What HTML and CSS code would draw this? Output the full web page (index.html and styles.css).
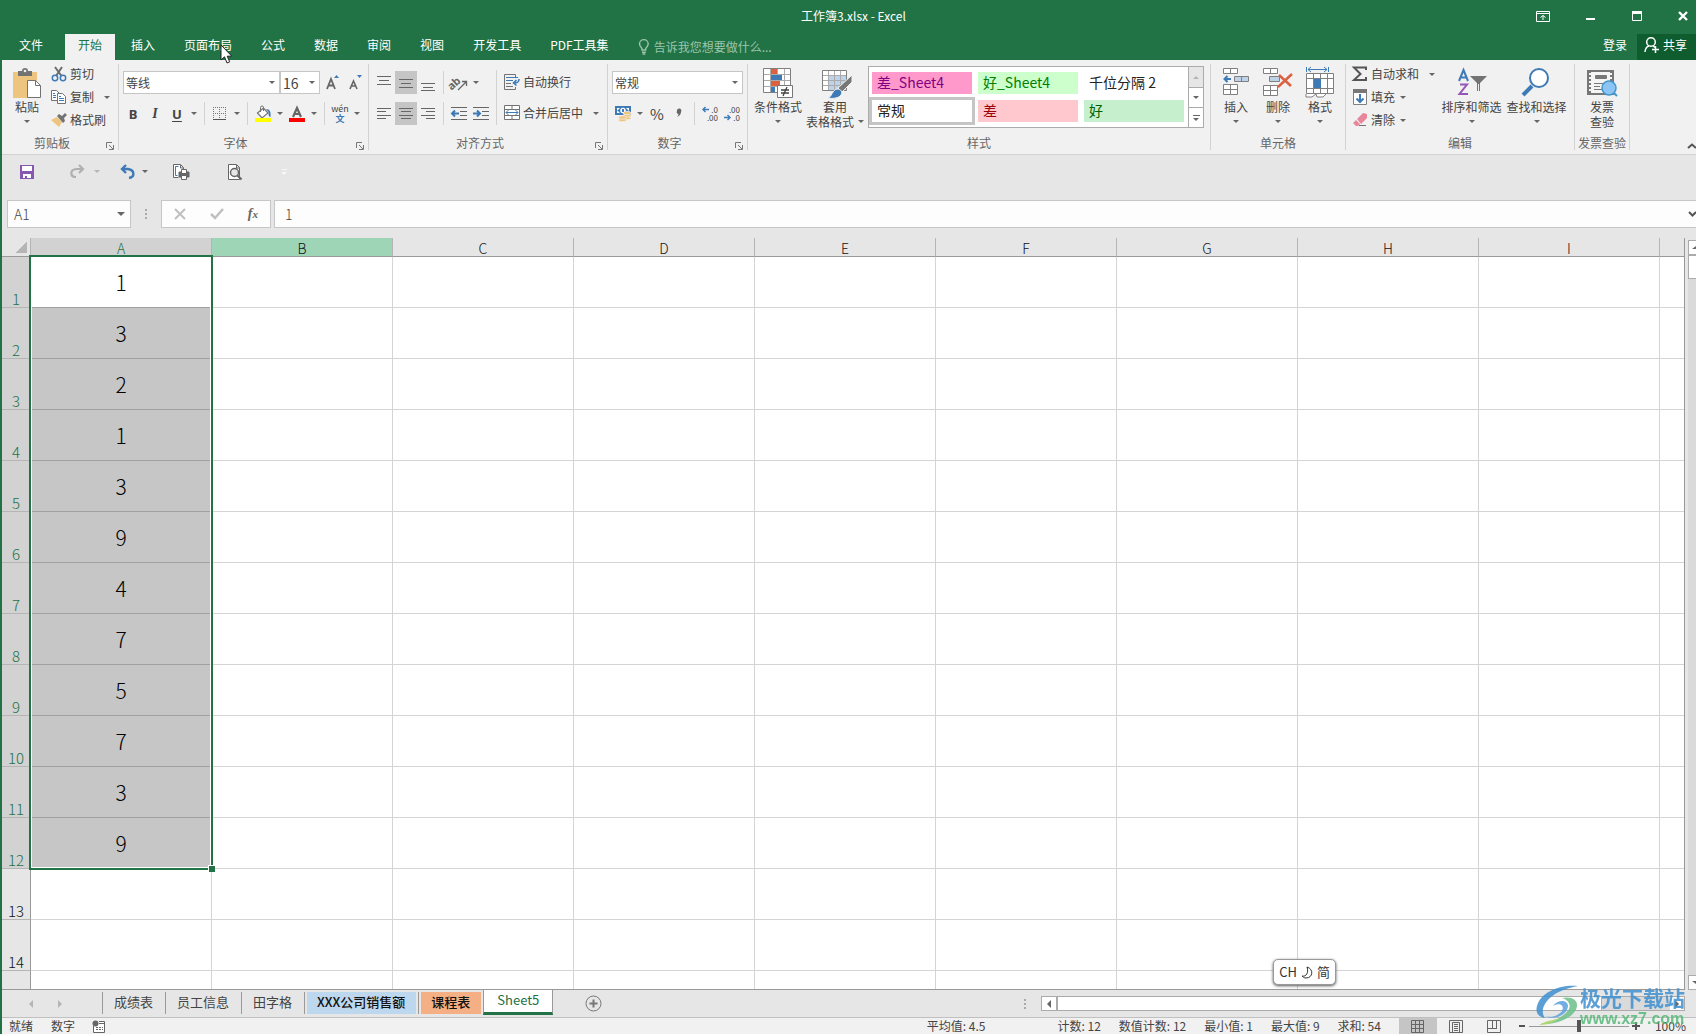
FILE: index.html
```html
<!DOCTYPE html>
<html lang="zh-CN">
<head>
<meta charset="utf-8">
<title>工作簿3.xlsx - Excel</title>
<link rel="stylesheet" href="styles.css">
</head>
<body>
<header class="titlebar">
  <h1 class="title">工作簿3.xlsx - Excel</h1>
  <div class="window-buttons">
    <button aria-label="功能区显示选项"><svg width="14" height="11" fill="none" stroke="#fff"><path d="M.5.5h13v10H.5zM1 2.500h12M7 9V4.500M4.500 6.500 7 4.500l2.500 2"/></svg></button>
    <button aria-label="最小化"><svg width="10" height="11"><path fill="#fff" d="M0 7h9v2H0z"/></svg></button>
    <button aria-label="最大化"><svg width="10" height="11" fill="none" stroke="#fff"><path d="M.5.5h9v9h-9z"/><path fill="#fff" stroke="none" d="M0 0h10v3H0z"/></svg></button>
    <button aria-label="关闭"><svg width="10" height="11" stroke="#fff" stroke-width="2.400"><path d="m1 1 8 8M9 1 1 9"/></svg></button>
  </div>
</header>

<nav class="tabs">
  <button class="tab tab-file">文件</button>
  <button class="tab tab-active">开始</button>
  <button class="tab">插入</button>
  <button class="tab">页面布局</button>
  <button class="tab">公式</button>
  <button class="tab">数据</button>
  <button class="tab">审阅</button>
  <button class="tab">视图</button>
  <button class="tab">开发工具</button>
  <button class="tab">PDF工具集</button>
  <label class="tellme">
    <svg width="12" height="16" fill="none" stroke="#9cc5ab" stroke-width="1.400"><path d="M4 11V9.500C2.500 8 1.500 7 1.500 5a4.300 4.300 0 0 1 8.700 0c0 2-1 3-2.500 4.500V11zM4 13.300h3.800M4.500 15h2.800"/></svg>
    <input type="text" placeholder="告诉我您想要做什么..." aria-label="告诉我您想要做什么">
  </label>
  <button class="login">登录</button>
  <button class="share"><svg width="16" height="18" fill="none" stroke="#fff" stroke-width="1.500"><circle cx="7" cy="6" r="4.300"/><path d="M1 16c.3-3.500 2-5.500 4-6M9 10l2 1.500M8 13.500h7M11.500 10v7"/></svg>共享</button>
</nav>

<section class="ribbon">
  <div class="group g-clip">
    <div class="group-body">
      <button class="big paste"><svg width="30" height="32"><path fill="#eec57e" d="M1 5h24v26H1z"/><path fill="#737373" d="M6 4h4a3 3 0 0 1 6 0h4v5H6z"/><circle cx="13" cy="4" r="1.300" fill="#f1f1f1"/><path fill="#fff" stroke="#737373" d="M15.500 13.500h8l5 5v12h-13z"/><path fill="none" stroke="#737373" d="M23.500 13.500v5h5"/></svg><span>粘贴</span><i class="caret"></i></button>
      <div class="stack">
        <button class="small"><svg width="16" height="16" fill="none"><path stroke="#6b6b6b" stroke-width="2" d="M4 1l6.500 9M11 1 5 10"/><circle cx="4" cy="12" r="2.700" stroke="#3e7ab5" stroke-width="1.500"/><circle cx="12" cy="12" r="2.700" stroke="#3e7ab5" stroke-width="1.500"/></svg>剪切</button>
        <button class="small"><svg width="16" height="16" fill="#fff" stroke="#737373"><path d="M.5 1.500h5l3 3v7h-8z"/><path d="M6.500 4.500h5l3 3v7h-8z"/><path stroke="#3e7ab5" d="M2 4.500h2M2 6.500h3M2 8.500h3M8 7.500h2M8 9.500h5M8 11.500h5"/></svg>复制<i class="caret far"></i></button>
        <button class="small"><svg width="16" height="16"><path fill="#eec57e" d="m0 8 6-3 5 5-3 5z"/><path fill="#737373" d="m6 4 2-2 3 2 3-3 2 2-3 3 1 3-2 2z"/></svg>格式刷</button>
      </div>
    </div>
    <div class="group-foot"><span>剪贴板</span><button class="launch" aria-label="剪贴板设置"><svg width="8" height="8" fill="none" stroke="#777"><path d="M.5 6V.5H6M3 3l4 4M7.500 3v4.500H3"/></svg></button></div>
  </div>

  <div class="group g-font">
    <div class="group-body rows">
      <div class="row">
        <span class="combo font-name"><select aria-label="字体"><option>等线</option></select></span>
        <span class="combo font-size"><select aria-label="字号"><option>16</option></select></span>
        <button class="ib grow" aria-label="增大字号"><svg width="14" height="16"><path fill="none" stroke="#666" stroke-width="1.800" d="m1 14 4-10 4 10M2.500 10.500h5"/><path fill="#3e7ab5" d="m8 3 2.500-3L13 3z"/></svg></button>
        <button class="ib" aria-label="减小字号"><svg width="14" height="16"><path fill="none" stroke="#666" stroke-width="1.600" d="m1 14 3.500-8L8 14M2 11h5"/><path fill="#3e7ab5" d="m8 0 2.500 3L13 0z"/></svg></button>
      </div>
      <div class="row">
        <button class="ib bold">B</button><button class="ib italic">I</button><button class="ib under">U</button><button class="cb" aria-label="下划线选项"><i class="caret"></i></button>
        <i class="vs"></i>
        <button class="ib" aria-label="边框"><svg width="14" height="14" fill="none" stroke="#777"><path stroke-dasharray="1 1" d="M0 .5h13M0 6.500h13M.5 0v12M6.500 0v12M12.500 0v12"/><path stroke="#555" d="M0 12.500h13"/></svg></button><button class="cb" aria-label="边框选项"><i class="caret"></i></button>
        <i class="vs"></i>
        <button class="ib" aria-label="填充颜色"><svg width="16" height="16"><path fill="#fff" stroke="#737373" stroke-width="1.200" d="m2.500 7 6-5L13 7l-6 5z"/><path fill="none" stroke="#737373" d="M5.500 6V1.500a1.500 1.500 0 0 1 3 0V5"/><path fill="#3e7ab5" d="M11 3c4 0 5 3 4.500 8-2 0-2-3-2-5z"/><path fill="#ff0" d="M0 12h16v4H0z"/></svg></button><button class="cb" aria-label="填充颜色选项"><i class="caret"></i></button>
        <button class="ib" aria-label="字体颜色"><svg width="16" height="16"><path fill="none" stroke="#666" stroke-width="2.200" d="m4 11 4-9 4 9M5.500 8h5"/><path fill="red" d="M0 12h16v4H0z"/></svg></button><button class="cb" aria-label="字体颜色选项"><i class="caret"></i></button>
        <i class="vs"></i>
        <button class="ib pinyin"><span>wén</span><b>文</b></button><button class="cb" aria-label="拼音选项"><i class="caret"></i></button>
      </div>
    </div>
    <div class="group-foot"><span>字体</span><button class="launch" aria-label="字体设置"><svg width="8" height="8" fill="none" stroke="#777"><path d="M.5 6V.5H6M3 3l4 4M7.500 3v4.500H3"/></svg></button></div>
  </div>

  <div class="group g-align">
    <div class="group-body">
      <div class="rows">
        <div class="row">
          <button class="ib" aria-label="顶端对齐"><svg width="14" height="16" stroke="#666"><path d="M0 1.500h14M2 5.500h10M0 9.500h14"/></svg></button>
          <button class="ib on" aria-label="垂直居中"><svg width="14" height="16" stroke="#666"><path d="M0 4.500h14M2 8.500h10M0 12.500h14"/></svg></button>
          <button class="ib" aria-label="底端对齐"><svg width="14" height="16" stroke="#666"><path d="M0 8.500h14M2 12.500h10M0 15.500h14"/></svg></button>
          <i class="vs"></i>
          <button class="ib" aria-label="方向"><svg width="17" height="16"><text x="-3" y="11" font-size="11" font-weight="700" fill="#666" font-family="Noto Sans" transform="rotate(-42 5 9)">ab</text><path fill="none" stroke="#666" stroke-width="1.300" d="m7 15 8-8M11 6.500h4.500V11"/></svg></button><button class="cb" aria-label="方向选项"><i class="caret"></i></button>
        </div>
        <div class="row">
          <button class="ib" aria-label="左对齐"><svg width="14" height="12" stroke="#666"><path d="M0 .5h14M0 3.500h9M0 7.500h14M0 10.500h9"/></svg></button>
          <button class="ib on" aria-label="居中"><svg width="14" height="12" stroke="#666"><path d="M0 .5h14M2 3.500h10M0 7.500h14M2 10.500h10"/></svg></button>
          <button class="ib" aria-label="右对齐"><svg width="14" height="12" stroke="#666"><path d="M0 .5h14M5 3.500h9M0 7.500h14M5 10.500h9"/></svg></button>
          <i class="vs"></i>
          <button class="ib" aria-label="减少缩进"><svg width="16" height="13" fill="none" stroke="#666"><path d="M0 .5h16M9 4.500h7M9 8.500h7M0 12.500h16"/><path stroke="#3e7ab5" stroke-width="2" d="M1 6.500h7M4 3.500l-3 3 3 3"/></svg></button>
          <button class="ib" aria-label="增加缩进"><svg width="16" height="13" fill="none" stroke="#666"><path d="M0 .5h16M9 4.500h7M9 8.500h7M0 12.500h16"/><path stroke="#3e7ab5" stroke-width="2" d="M0 6.500h7M4 3.500l3 3-3 3"/></svg></button>
        </div>
      </div>
      <i class="vs tall"></i>
      <div class="rows">
        <div class="row"><button class="small"><svg width="16" height="16" fill="none" stroke="#737373"><path d="M11.500 3V.5H.5v15h11V13"/><path d="M2 9.500h5M2 12.500h7" /><path stroke="#3e7ab5" d="M2 3.500h12M2 6.500h7"/><path stroke="#3e7ab5" stroke-width="1.600" d="M15 5c0 3-1 4-5 4M12.500 6 9.500 9l3 2.500"/></svg>自动换行</button></div>
        <div class="row"><button class="small"><svg width="16" height="16" fill="none" stroke="#737373"><path fill="#fff" d="M.5.5h15v14H.5z"/><path d="M0 4.500h16M0 10.500h16M8 0v4M8 11v4"/><path stroke="#3e7ab5" d="M2 7.500h12M4.500 5 2 7.500 4.500 10M11.500 5 14 7.500 11.500 10"/></svg>合并后居中<i class="caret far"></i></button></div>
      </div>
    </div>
    <div class="group-foot"><span>对齐方式</span><button class="launch" aria-label="对齐设置"><svg width="8" height="8" fill="none" stroke="#777"><path d="M.5 6V.5H6M3 3l4 4M7.500 3v4.500H3"/></svg></button></div>
  </div>

  <div class="group g-num">
    <div class="group-body rows">
      <div class="row"><span class="combo num-format"><select aria-label="数字格式"><option>常规</option></select></span></div>
      <div class="row">
        <button class="ib" aria-label="会计数字格式"><svg width="16" height="16"><path fill="#3e7ab5" d="M0 0h16v9H0z"/><path fill="#fff" d="M2 2h3L2 5zM14 2h-3l3 3zM2 7h3L2 4z"/><circle cx="8" cy="4.500" r="2.700" fill="#fff"/><path fill="#3e7ab5" d="M7 3h2v3H7z"/><g fill="#eec57e" stroke="#f1f1f1" stroke-width=".7"><ellipse cx="12" cy="12" rx="4" ry="1.700"/><ellipse cx="12" cy="9.500" rx="4" ry="1.700"/><ellipse cx="12" cy="7" rx="4" ry="1.700"/><ellipse cx="7.500" cy="14" rx="4" ry="1.700"/><ellipse cx="7.500" cy="11.500" rx="4" ry="1.700"/></g></svg></button><button class="cb" aria-label="货币选项"><i class="caret"></i></button>
        <button class="ib percent">%</button>
        <button class="ib" aria-label="千位分隔样式"><svg width="6" height="10"><path fill="#666" d="M1 2a2.200 2.200 0 1 1 4 1c0 2-1.500 4-4 5 1-1 1.500-2 1.500-3A2 2 0 0 1 1 2z"/></svg></button>
        <i class="vs"></i>
        <button class="ib dec" aria-label="增加小数位数"><span>.0</span><span>.00</span><svg width="7" height="7" fill="none" stroke="#3e7ab5" stroke-width="1.400"><path d="M1 3.500h6M3.500 1 1 3.500 3.500 6"/></svg></button>
        <button class="ib dec dec-less" aria-label="减少小数位数"><span>.00</span><span>.0</span><svg width="7" height="7" fill="none" stroke="#3e7ab5" stroke-width="1.400"><path d="M0 3.500h6M3.500 1 6 3.500 3.500 6"/></svg></button>
      </div>
    </div>
    <div class="group-foot"><span>数字</span><button class="launch" aria-label="数字设置"><svg width="8" height="8" fill="none" stroke="#777"><path d="M.5 6V.5H6M3 3l4 4M7.500 3v4.500H3"/></svg></button></div>
  </div>

  <div class="group g-style">
    <div class="group-body">
      <button class="big cond"><svg width="30" height="32"><path fill="#fff" stroke="#808080" d="M.5 1.500h27v24H.5z"/><path fill="none" stroke="#aaa" d="M7.500 2v23M14.500 2v23M21.500 2v23M1 7.500h26M1 13.500h26M1 19.500h26"/><path fill="#dc6141" d="M8 2h6v5H8zM8 14h9v5H8z"/><path fill="#3e7ab5" d="M8 8h11v5H8zM8 20h4v5H8z"/><path fill="#fff" stroke="#777" d="M14.500 18.500h15v12h-15z"/><path fill="none" stroke="#444" stroke-width="1.300" d="M18 23h8M18 26h8M24 20l-4 9"/></svg><span>条件格式</span><i class="caret"></i></button>
      <button class="big tablefmt"><svg width="26" height="32"><path fill="#fff" stroke="#808080" d="M.5 3.500h24v20H.5z"/><path fill="#bed3ea" d="M7 9h17v14H7z"/><path fill="none" stroke="#aaa" d="M6.500 4v19M12.500 4v19M18.500 4v19M1 8.500h23M1 13.500h23M1 18.500h23"/><path fill="#777" stroke="#f1f1f1" d="M30 8v7L20 25l-4-4z"/><path fill="#3e7ab5" stroke="#f1f1f1" d="M6 31c4-1 4-8 9-9 4 0 6 3 4 6s-8 4-13 3z"/></svg><span>套用</span><span class="withcaret">表格格式<i class="caret"></i></span></button>
      <div class="gallery">
        <div class="swatches">
          <button class="sw bad4">差_Sheet4</button><button class="sw good4">好_Sheet4</button><button class="sw">千位分隔 2</button>
          <button class="sw chosen">常规</button><button class="sw bad">差</button><button class="sw good">好</button>
        </div>
        <div class="gallery-nav">
          <button class="off" aria-label="上一行"><i class="caret up"></i></button>
          <button aria-label="下一行"><i class="caret"></i></button>
          <button class="more" aria-label="其他样式"><i class="caret"></i></button>
        </div>
      </div>
    </div>
    <div class="group-foot"><span>样式</span></div>
  </div>

  <div class="group g-cells">
    <div class="group-body">
      <button class="big"><svg width="28" height="32" fill="#fff" stroke="#808080"><path d="M1.500 1.500h14v5h-14zM8.500 1.500v5M1.500 17.500h14v10h-14zM8.500 17.500v10M1.500 22.500h14"/><path fill="#bed3ea" d="M12.500 9.500h14v5h-14zM19.500 9.500v5"/><path fill="none" stroke="#3e7ab5" stroke-width="2" d="M3 12h6M5.500 9 2.500 12l3 3"/></svg><span>插入</span><i class="caret"></i></button>
      <button class="big"><svg width="30" height="32" fill="#fff" stroke="#808080"><path d="M.5 1.500h14v5H.5zM7.500 1.500v5M.5 18.500h14v10H.5zM7.500 18.500v10M.5 23.500h14"/><path fill="#bed3ea" d="M6.500 9.500h10v5h-10z"/><path fill="none" stroke="#dc6141" stroke-width="2.500" d="m16 8 12 11M29 7 15 20"/></svg><span>删除</span><i class="caret"></i></button>
      <button class="big"><svg width="30" height="32" fill="none" stroke="#3e7ab5"><path d="M1.500 0v5M23.500 0v5M3 2.500h19M6 0 3 2.500 6 5M19 0l3 2.500L19 5"/><path fill="#fff" stroke="#808080" d="M1.500 6.500h27v20h-27zM8.500 6.500v20M15.500 6.500v20M22.500 6.500v20M1.500 11.500h27M1.500 21.500h27M1 27v3h6l4-3 1 3h6l3-3"/><path fill="#3e7ab5" stroke="none" d="M9 12h7v9H9z"/></svg><span>格式</span><i class="caret"></i></button>
    </div>
    <div class="group-foot"><span>单元格</span></div>
  </div>

  <div class="group g-edit">
    <div class="group-body">
      <div class="stack">
        <button class="small"><svg width="16" height="16" fill="none" stroke="#555" stroke-width="2"><path d="M14 4V1.500H2L8.500 8 2 14h12v-3"/></svg>自动求和<i class="caret far"></i></button>
        <button class="small"><svg width="16" height="16" fill="none"><path fill="#fff" stroke="#808080" d="M1.500.5h13v15h-13z"/><path fill="#777" d="M1 0h14v4H1z"/><path stroke="#3e7ab5" stroke-width="2" d="M8 5v8M4.500 9.500 8 13l3.500-3.500"/></svg>填充<i class="caret"></i></button>
        <button class="small"><svg width="16" height="16"><path fill="#e8879b" d="m5 7 6-6 4 1v4l-6 6zM1 11l3-3 4 4-2 2H4z"/><path stroke="#737373" d="M7 13.500h7"/></svg>清除<i class="caret"></i></button>
      </div>
      <button class="big wide"><svg width="32" height="32" fill="none" stroke-width="2"><path stroke="#3e7ab5" d="m3 14 4.500-11L12 14M4.500 10.500h6"/><path stroke="#9557b5" d="M4 17.500h7L3.500 27H12"/><path fill="#737373" d="M14 9h17l-7 7v8h-3v-8z"/><path stroke="#f1f1f1" stroke-width="1" d="M22.500 17v7"/></svg><span>排序和筛选</span><i class="caret"></i></button>
      <button class="big wide"><svg width="32" height="32"><path stroke="#3e7ab5" stroke-width="4" d="m2 28 9-9"/><circle cx="18" cy="11" r="9" fill="#fff" stroke="#3e7ab5" stroke-width="2"/></svg><span>查找和选择</span><i class="caret"></i></button>
    </div>
    <div class="group-foot"><span>编辑</span></div>
  </div>

  <div class="group g-inv">
    <div class="group-body">
      <button class="big"><svg width="32" height="32"><path fill="#f5f5f5" stroke="#777" stroke-width="2" d="M2 4h25v23H2z"/><path stroke="#777" stroke-width="2" stroke-dasharray="2 2" d="M4 4v23M25 4v12"/><rect x="9" y="8" width="12" height="4" rx="1" fill="#777"/><path stroke="#777" d="M8 16.500h9M8 19.500h6M8 22.500h8"/><circle cx="23" cy="21" r="7" fill="#8cc4f5" stroke="#4596c8" stroke-width="1.500"/><path stroke="#4596c8" stroke-width="2" d="m28 26 3 3"/></svg><span>发票</span><span>查验</span></button>
    </div>
    <div class="group-foot"><span>发票查验</span></div>
  </div>
  <button class="collapse" aria-label="折叠功能区"><svg width="9" height="6" fill="none" stroke="#555" stroke-width="2"><path d="m1 5 4-3.500L9 5"/></svg></button>
</section>

<div class="quick">
  <button class="q" aria-label="保存"><svg width="16" height="16"><path fill="#8858b0" d="M1 1h14v14H1z"/><path fill="#fff" d="M3 2h10v5H3zM4 10h8v4H8v-2H6v2H4z"/></svg></button>
  <button class="q q-redo" aria-label="恢复"><svg width="16" height="16" fill="none" stroke="#b0b0b0" stroke-width="2.200"><path d="M14 5H7C.500 6 1 13 7 13M10 1l4 4-4 4"/></svg></button><i class="caret pale"></i>
  <button class="q q-undo" aria-label="撤消"><svg width="16" height="16" fill="none" stroke="#3e7ab5" stroke-width="2.400"><path d="M2 5h6c7 1 7 8 1 9M6 1 2 5l4 4"/></svg></button><i class="caret"></i>
  <button class="q q-print" aria-label="快速打印"><svg width="17" height="16" fill="none" stroke="#666"><path fill="#fff" d="M5.500 13.500h-5V.5h7l3 3V6M7.500 1v3h3"/><path stroke="#3e7ab5" d="M5.500 2.500h-3v9h2"/><path fill="#666" d="M6 8h10v5H6z"/><path fill="#fff" d="M8.500 5.500h5v4h-5zM8.500 11.500h5v4h-5z"/></svg></button>
  <button class="q q-preview" aria-label="打印预览"><svg width="16" height="16" fill="none" stroke="#666"><path fill="#fff" d="M1.500.5h8l3 3v12h-11zM9.500 1v3h3"/><circle cx="7.500" cy="8.500" r="4" fill="#e6e6e6" stroke-width="1.500"/><path stroke-width="2.200" d="m10.500 11.500 4 4"/></svg></button>
  <button class="q-more" aria-label="自定义快速访问工具栏"><i class="caret"></i></button>
</div>

<div class="formula">
  <span class="namebox"><input type="text" value="A1" aria-label="名称框"><i class="caret wide-caret"></i></span>
  <i class="dots"></i>
  <div class="fx">
    <button aria-label="取消"><svg width="12" height="12" stroke="#c0c0c0" stroke-width="2"><path d="m1 1 10 10M11 1 1 11"/></svg></button>
    <button aria-label="输入"><svg width="14" height="12" fill="none" stroke="#c0c0c0" stroke-width="2.500"><path d="m1 6 4 4 8-9"/></svg></button>
    <button class="fxbtn">f<sub>x</sub></button>
  </div>
  <div class="fbox"><input type="text" value="1" aria-label="编辑栏"><svg width="8" height="6" fill="none" stroke="#555" stroke-width="2"><path d="m1 1 3.500 3.500L8 1"/></svg></div>
</div>

<main class="work">
  <div class="sheet">
    <table>
      <colgroup><col class="c-row"><col class="c"><col class="c"><col class="c"><col class="c"><col class="c"><col class="c"><col class="c"><col class="c"><col class="c"><col></colgroup>
      <thead><tr><td class="corner"></td><th class="sel">A</th><th class="hover">B</th><th>C</th><th>D</th><th>E</th><th>F</th><th>G</th><th>H</th><th>I</th><th></th></tr></thead>
      <tbody>
        <tr class="s"><th>1</th><td class="active">1</td><td></td><td></td><td></td><td></td><td></td><td></td><td></td><td></td><td></td></tr>
        <tr class="s"><th>2</th><td>3</td><td></td><td></td><td></td><td></td><td></td><td></td><td></td><td></td><td></td></tr>
        <tr class="s"><th>3</th><td>2</td><td></td><td></td><td></td><td></td><td></td><td></td><td></td><td></td><td></td></tr>
        <tr class="s"><th>4</th><td>1</td><td></td><td></td><td></td><td></td><td></td><td></td><td></td><td></td><td></td></tr>
        <tr class="s"><th>5</th><td>3</td><td></td><td></td><td></td><td></td><td></td><td></td><td></td><td></td><td></td></tr>
        <tr class="s"><th>6</th><td>9</td><td></td><td></td><td></td><td></td><td></td><td></td><td></td><td></td><td></td></tr>
        <tr class="s"><th>7</th><td>4</td><td></td><td></td><td></td><td></td><td></td><td></td><td></td><td></td><td></td></tr>
        <tr class="s"><th>8</th><td>7</td><td></td><td></td><td></td><td></td><td></td><td></td><td></td><td></td><td></td></tr>
        <tr class="s"><th>9</th><td>5</td><td></td><td></td><td></td><td></td><td></td><td></td><td></td><td></td><td></td></tr>
        <tr class="s"><th>10</th><td>7</td><td></td><td></td><td></td><td></td><td></td><td></td><td></td><td></td><td></td></tr>
        <tr class="s"><th>11</th><td>3</td><td></td><td></td><td></td><td></td><td></td><td></td><td></td><td></td><td></td></tr>
        <tr class="s"><th>12</th><td>9</td><td></td><td></td><td></td><td></td><td></td><td></td><td></td><td></td><td></td></tr>
        <tr><th>13</th><td></td><td></td><td></td><td></td><td></td><td></td><td></td><td></td><td></td><td></td></tr>
        <tr><th>14</th><td></td><td></td><td></td><td></td><td></td><td></td><td></td><td></td><td></td><td></td></tr>
        <tr><th></th><td></td><td></td><td></td><td></td><td></td><td></td><td></td><td></td><td></td><td></td></tr>
      </tbody>
    </table>
    <div class="selection"></div>
    <div class="ime">CH <svg width="12" height="13" fill="none" stroke="#333"><path d="M6 1c7 2 6 11-1 11-2 0-3-1-4-2 4 1 7-3 5-9z"/></svg> 简</div>
  </div>
  <div class="vscroll">
    <div class="vs-btn"><i class="caret up"></i></div>
    <div class="vs-thumb"></div>
    <div class="vs-track"></div>
    <div class="vs-btn"><i class="caret"></i></div>
  </div>
</main>

<footer>
  <div class="sheetbar">
    <div class="sheetnav"><i class="tri-l"></i><i class="tri-r"></i></div>
    <button class="st">成绩表</button>
    <button class="st">员工信息</button>
    <button class="st">田字格</button>
    <button class="st tint blue"><span>XXX公司销售额</span></button>
    <button class="st tint orange"><span>课程表</span></button>
    <button class="st current">Sheet5</button>
    <button class="add" aria-label="新工作表"><svg width="17" height="17" fill="none" stroke="#777"><circle cx="8.500" cy="8.500" r="7.500"/><path stroke-width="2" d="M8.500 4.500v8M4.500 8.500h8"/></svg></button>
    <i class="dots"></i>
    <div class="hscroll"><span class="hs-btn"><i class="tri-l"></i></span><span class="hs-thumb"></span><span class="hs-track"></span><span class="hs-btn"><i class="tri-r"></i></span></div>
  </div>
  <div class="status">
    <span>就绪</span><span>数字</span>
    <svg class="macro" width="14" height="13" fill="none" stroke="#666"><path fill="#fff" d="M1.500 6v6.500h11v-11H7"/><path stroke-dasharray="2 1" d="M4 7.500h7M4 9.500h7"/><path d="M7 3.500h6"/><circle cx="3.500" cy="3.500" r="3" fill="#666" stroke="none"/></svg>
    <span class="avg">平均值: 4.5</span><span class="cnt">计数: 12</span><span>数值计数: 12</span><span>最小值: 1</span><span>最大值: 9</span><span>求和: 54</span>
    <div class="views">
      <button class="on" aria-label="普通"><svg width="14" height="13" fill="none" stroke="#666"><path d="M.5.5h12v12H.5zM4.500 0v13M8.500 0v13M0 4.500h13M0 8.500h13"/></svg></button>
      <button aria-label="页面布局"><svg width="14" height="13" fill="none" stroke="#666"><path d="M.5.5h13v12H.5zM3.500 2.500h7v10h-7zM5 4.500h4M5 6.500h4M5 8.500h4M5 10.500h4"/></svg></button>
      <button aria-label="分页预览"><svg width="14" height="13" fill="none" stroke="#666"><path d="M.5.5h13v12H.5zM5.500 0v8M9.500 0v8M1 8.500h9"/></svg></button>
    </div>
    <div class="zoombox">
      <button aria-label="缩小"><svg width="8" height="8"><path fill="#555" d="M1 3h6v2H1z"/></svg></button>
      <input class="zoom" type="range" min="10" max="190" value="100" aria-label="缩放">
      <button aria-label="放大"><svg width="8" height="8"><path fill="#555" d="M0 3h8v2H0zM3 0h2v8H3z"/></svg></button>
    </div>
    <span class="pct">100%</span>
  </div>
</footer>

<div class="watermark">
  <svg width="44" height="42" viewBox="0 0 44 42"><path fill="#3f8fd0" d="M42 1C26-1 5 6 1 21c-2 7 2 11 8 12C4 26 8 18 15 12 22 6 32 3 42 1z"/><path fill="#5aa0dc" d="M7 30c5 4 16 1 19-4 3-6-3-9-9-5 5-7 15-6 15 0 0 9-16 16-25 9z"/><path fill="#6cc08a" d="M26 13c8-2 16 1 15 8-1 10-18 19-36 18 14-2 25-9 28-15 2-5-1-9-7-11z"/><path fill="#a5d05d" d="M3 40c9-5 16-5 21-7-5 4-12 7-21 7z"/></svg>
  <div><strong>极光下载站</strong><em>www.xz7.com</em></div>
</div>
<svg class="pointer" width="14" height="21" viewBox="0 0 14 21"><path fill="#fff" stroke="#222" d="M1 1v15l3.500-3.200L7 19l2.700-1.200-2.500-5.600h4.600z"/></svg>
</body>
</html>
```

FILE: styles.css
```css
* { box-sizing: border-box; }

body {
  margin: 0;
  height: 100vh;
  display: flex;
  flex-direction: column;
  overflow: hidden;
  background: #e6e6e6;
  border-left: 2px solid #217346;
  color: #444;
  font: 12px/16px "Noto Sans CJK SC", sans-serif;
}

button, input, select { font: inherit; color: inherit; margin: 0; }
button { display: flex; align-items: center; justify-content: center; padding: 0; border: 0; background: none; white-space: nowrap; }
input { border: 0; background: none; padding: 0; min-width: 0; outline: 0; }
svg { display: block; flex: none; overflow: visible; }

.caret { flex: none; width: 0; height: 0; border: 3px solid transparent; border-top-color: #666; border-bottom: 0; }
.caret.up { border-top: 0; border-bottom: 3px solid #b5b5b5; }
.caret.pale { border-top-color: #b5b5b5; }
.wide-caret { border-width: 4px 4px 0; }

/* Title bar */
.titlebar { flex: none; height: 34px; display: grid; grid-template-columns: 1fr auto 1fr; align-items: center; padding-bottom: 2px; background: #217346; color: #fff; }
.title { grid-column: 2; margin: 0; padding-left: 9px; font-size: 12px; font-weight: 400; }
.window-buttons { display: flex; justify-content: flex-end; gap: 36px; padding-right: 8px; }

/* Ribbon tabs */
.tabs { flex: none; height: 26px; display: flex; gap: 3px; background: #217346; color: #fff; }
.tab { padding: 0 13px 5px; }
.tab-file { margin: 0 6px 0 4px; }
.tab-active { background: #f1f1f1; color: #217346; }
.tellme { flex: 1; display: flex; align-items: center; gap: 4px; margin-left: 13px; padding-bottom: 1px; }
.tellme input { flex: 1; }
.tellme input::placeholder { color: #9cc5ab; opacity: 1; }
.login { padding: 0 7px 4px; }
.share { gap: 3px; padding: 0 9px 4px 7px; background: #0f5c2e; }

/* Ribbon */
.ribbon { flex: none; height: 95px; display: flex; padding: 4px 0; background: #f1f1f1; border-bottom: 1px solid #d2d2d2; }
.group { flex: none; display: flex; flex-direction: column; border-right: 1px solid #d2d2d2; }
.group-body { flex: 1; display: flex; }
.group-foot { height: 16px; line-height: 18px; display: flex; color: #666; white-space: nowrap; }
.group-foot span { flex: 1; display: flex; justify-content: center; width: 0; }
.launch { flex: none; width: 16px; align-items: flex-end; }
.g-clip { width: 117px; }
.g-font { width: 250px; }
.g-align { width: 239px; }
.g-num { width: 140px; }
.g-style { width: 463px; }
.g-cells { width: 135px; }
.g-edit { width: 229px; }
.g-inv { width: 55px; }
.g-clip .group-body { padding-left: 4px; }
.g-font .group-body { padding-left: 3px; }
.g-align .group-body, .g-num .group-body, .g-cells .group-body { padding-left: 4px; }
.g-style .group-body, .g-edit .group-body { padding-left: 3px; }
.g-inv .group-body { justify-content: center; }

.rows { display: flex; flex-direction: column; gap: 8px; padding-top: 7px; }
.g-align .group-body > .rows { flex: none; }
.row { display: flex; height: 23px; }
.ib { width: 22px; height: 23px; flex: none; }
.ib.on { background: #c5c5c5; }
.cb { width: 12px; flex: none; }
.vs { flex: none; width: 1px; margin: 0 4px; background: #d2d2d2; }
.vs.tall { height: 55px; margin-top: 6px; }
.stack { display: flex; flex-direction: column; }
.small { height: 23px; gap: 3px; justify-content: flex-start; }
.stack .small { padding: 0 3px 3px; }
.g-align .small { padding: 0 3px 1px; }
.small .caret { margin-left: 2px; }
.small .caret.far { margin-left: 7px; }
.big { flex: none; width: 42px; height: 70px; flex-direction: column; justify-content: flex-start; padding-top: 3px; line-height: 15px; }
.big > .caret { margin-top: 6px; }
.big.cond { width: 54px; }
.big.tablefmt { width: 60px; }
.big.wide { width: 65px; }
.withcaret { display: flex; align-items: center; gap: 4px; }
.g-edit .stack { width: 90px; }

.combo { position: relative; display: flex; background: #fff; border: 1px solid #c6c6c6; }
.combo::after { content: ""; position: absolute; right: 4px; top: 9px; border: 3px solid transparent; border-top-color: #666; border-bottom: 0; }
.combo select { appearance: none; width: 100%; border: 0; padding: 0 2px; background: none; }
.font-name { width: 157px; margin-left: 1px; }
.font-size { width: 40px; }
.font-size select { font-size: 14px; }
.num-format { width: 131px; }
.grow { margin: 0 1px 0 2px; }
.bold { font: 700 13px "Noto Sans", sans-serif; }
.italic { font: italic 700 14px "Liberation Serif", serif; }
.under { font: 700 13px "Noto Sans", sans-serif; text-decoration: underline; text-underline-offset: 2px; }
.pinyin { flex-direction: column; line-height: 10px; font-size: 9px; }
.pinyin b { color: #3e7ab5; }
.percent { font-size: 15px; }
.dec { display: grid; grid-template-columns: 1fr auto; grid-template-rows: 8px 8px; align-content: center; padding: 0 3px; font-size: 8px; line-height: 8px; }
.dec span { grid-column: 1 / 3; justify-self: end; }
.dec span:first-child { grid-row: 1; }
.dec span:nth-child(2) { grid-row: 2; }
.dec svg { grid-area: 1 / 1; }
.dec-less svg { grid-area: 2 / 1; }

.gallery { display: flex; width: 336px; height: 62px; margin: 2px 0 0 3px; background: #fff; border: 1px solid #ababab; }
.swatches { flex: 1; display: grid; grid-template-columns: repeat(3, 100px); grid-auto-rows: 22px; gap: 6px; padding: 5px 3px; }
.sw { justify-content: flex-start; padding: 0 0 2px 5px; font-size: 14px; line-height: 20px; color: #222; }
.bad4 { background: #ff99cc; color: #800080; }
.good4 { background: #ccffcc; color: #008000; }
.bad { background: #ffc7ce; color: #9c0006; }
.good { background: #c6efce; color: #006100; }
.chosen { outline: 3px solid #c5c5c5; }
.gallery-nav { width: 15px; display: grid; grid-template-rows: repeat(3, 1fr); border-left: 1px solid #ababab; }
.gallery-nav button + button { border-top: 1px solid #ababab; }
.gallery-nav .off { background: #e6e6e6; }
.more { flex-direction: column; gap: 2px; }
.more::before { content: ""; width: 7px; height: 1px; background: #666; }
.collapse { align-items: flex-end; margin-left: auto; padding-bottom: 1px; }

/* Quick access toolbar */
.quick { flex: none; height: 35px; display: flex; align-items: center; padding: 0 0 2px 17px; }
.q-redo { margin: 0 9px 0 34px; }
.q-undo { margin: 0 6px 0 20px; }
.q-print { margin-left: 25px; }
.q-preview { margin-left: 37px; }
.q-more { margin-left: 38px; flex-direction: column; gap: 2px; }
.q-more::before { content: ""; width: 5px; height: 1px; background: #f8f8f8; }
.q-more .caret { border-top-color: #f8f8f8; }

/* Formula bar */
.formula { flex: none; height: 28px; display: flex; margin: 10px 0; padding-left: 5px; font-size: 14px; }
.namebox, .fx, .fbox { display: flex; align-items: center; background: #fdfdfd; border: 1px solid #c6c6c6; }
.namebox { width: 124px; padding: 0 5px 0 6px; }
.namebox input { flex: 1; }
.namebox input, .fbox input { font-weight: 300; }
.dots { flex: none; align-self: center; width: 2px; height: 10px; background: repeating-linear-gradient(#aaa 0 2px, transparent 2px 4px); }
.formula .dots { margin: 0 14px; }
.fx { width: 110px; justify-content: space-between; padding: 0 12px; }
.fxbtn { font: italic 700 14px "Liberation Serif", serif; color: #666; align-items: baseline; }
.fxbtn sub { font-size: 11px; }
.fbox { flex: 1; margin-left: 3px; padding-left: 10px; border-right: 0; }
.fbox input { flex: 1; }

/* Worksheet */
.work { flex: 1; min-height: 0; display: flex; gap: 3px; }
.sheet { flex: 1; min-width: 0; position: relative; overflow: hidden; background: #fff; border-bottom: 1px solid #999; border-right: 1px solid #999; }
table { width: 100%; table-layout: fixed; border-spacing: 0; }
.c-row { width: 29px; }
.c { width: 181px; }
th, td { padding: 0; font-weight: 300; text-align: center; border: 0 solid #d4d4d4; border-width: 0 1px 1px 0; }
th:last-child, td:last-child { border-right: 0; }
thead { background: #e6e6e6; }
thead th, thead td { height: 19px; padding-top: 2px; font-size: 14px; line-height: 16px; color: #111; border-color: #b5b5b5; border-bottom-color: #999; }
.corner { background: linear-gradient(135deg, transparent 50%, #b5b5b5 50%) right 3px top 4px / 11px 11px no-repeat; }
thead .sel { background: #d2d2d2; color: #217346; }
thead .hover { background: #9fd5b7; }
tbody th { height: 51px; background: #e6e6e6; vertical-align: bottom; font-size: 15px; line-height: 16px; color: #111; border-color: #b5b5b5; border-right-color: #999; }
tbody td { font-size: 21px; line-height: 24px; color: #000; }
.s th { background: #d2d2d2; color: #217346; }
.s td:nth-child(2) { background: #c6c6c6; border-bottom-color: #a0a0a0; }
.s td.active { background: #fff; }
.selection { position: absolute; left: 27px; top: 17px; width: 184px; height: 615px; border: 2px solid #217346; box-shadow: inset 0 0 0 1px #fff; }
.selection::after { content: ""; position: absolute; right: -4px; bottom: -4px; width: 6px; height: 6px; background: #217346; border: solid #fff; border-width: 1px 0 0 1px; }
.ime { position: absolute; right: 348px; bottom: 4px; display: flex; align-items: center; gap: 4px; height: 26px; padding: 0 5px; background: #fff; border: 1px solid #999; border-radius: 5px; box-shadow: 0 1px 3px #555; color: #333; font-size: 13px; }
.vscroll { flex: none; width: 8px; margin-top: 2px; display: flex; flex-direction: column; overflow: hidden; }
.vs-btn, .vs-thumb { flex: none; width: 16px; height: 15px; background: #fff; border: 1px solid #ababab; display: flex; align-items: center; padding-left: 3px; }
.vs-btn .up { border-bottom-color: #666; }
.vs-btn .caret { border-left-width: 4px; border-right-width: 4px; }
.vs-thumb { height: 24px; }
.vs-track { flex: 1; background: #dadada; }

/* Sheet tabs */
.sheetbar { height: 27px; display: flex; font-size: 13px; }
.sheetnav { width: 100px; display: flex; align-items: center; gap: 25px; padding-left: 27px; }
.tri-l, .tri-r { width: 0; height: 0; border: 4px solid transparent; }
.tri-l { border-right-color: #666; border-left: 0; }
.tri-r { border-left-color: #666; border-right: 0; }
.sheetnav .tri-l { border-right-color: #b5b5b5; }
.sheetnav .tri-r { border-left-color: #b5b5b5; }
.st { height: 22px; margin-top: 2px; padding: 0 12px 3px 11px; border-left: 1px solid #999; }
.st.tint { padding: 0 2px; color: #111; font-weight: 500; }
.tint span { padding: 1px 11px 4px 10px; line-height: 17px; }
.blue span { background: #bdd7ee; }
.orange span { background: #f4b084; }
.st.current { height: 25px; margin-top: 0; padding: 0 13px 2px; background: #fff; color: #217346; border-left: 1px solid #999; border-right: 1px solid #999; border-bottom: 3px solid #217346; }
.add { margin: 0 auto 0 32px; }
.sheetbar .dots { margin-right: 15px; }
.hscroll { width: 38%; height: 15px; margin: 6px 11px 0 0; display: flex; border: 1px solid #ababab; background: #dadada; }
.hs-btn { width: 14px; background: #fff; display: flex; align-items: center; justify-content: center; }
.hs-thumb { flex: 8; background: #fff; border: 0 solid #ababab; border-width: 0 1px 0 2px; }
.hs-track { flex: 1; }

/* Status bar */
.status { height: 17px; display: flex; align-items: center; gap: 18px; padding: 0 10px 0 7px; background: #f1f1f1; border-top: 1px solid #c0c0c0; white-space: nowrap; overflow: hidden; }
.macro { margin-left: -1px; }
.avg { margin-left: auto; }
.cnt { margin-left: 54px; }
.views { display: flex; align-self: stretch; }
.views button { width: 38px; }
.views .on { background: #c5c5c5; }
.zoombox { display: flex; align-items: center; gap: 3px; margin-left: -13px; }
.zoom { appearance: none; width: 100px; height: 12px; background: linear-gradient(#999, #999) center / 100% 1px no-repeat; }
.zoom::-webkit-slider-thumb { appearance: none; width: 4px; height: 12px; background: #555; }
.pct { margin-left: -3px; }

/* Overlays */
.watermark { position: fixed; right: 11px; bottom: 6px; display: flex; align-items: center; opacity: .85; pointer-events: none; }
.watermark div { display: flex; flex-direction: column; }
.watermark strong { font-size: 21px; line-height: 26px; color: #3f8fd0; }
.watermark em { font: 700 16px/18px "Liberation Sans", sans-serif; color: #55b878; }
.pointer { position: fixed; left: 220px; top: 44px; }
```
